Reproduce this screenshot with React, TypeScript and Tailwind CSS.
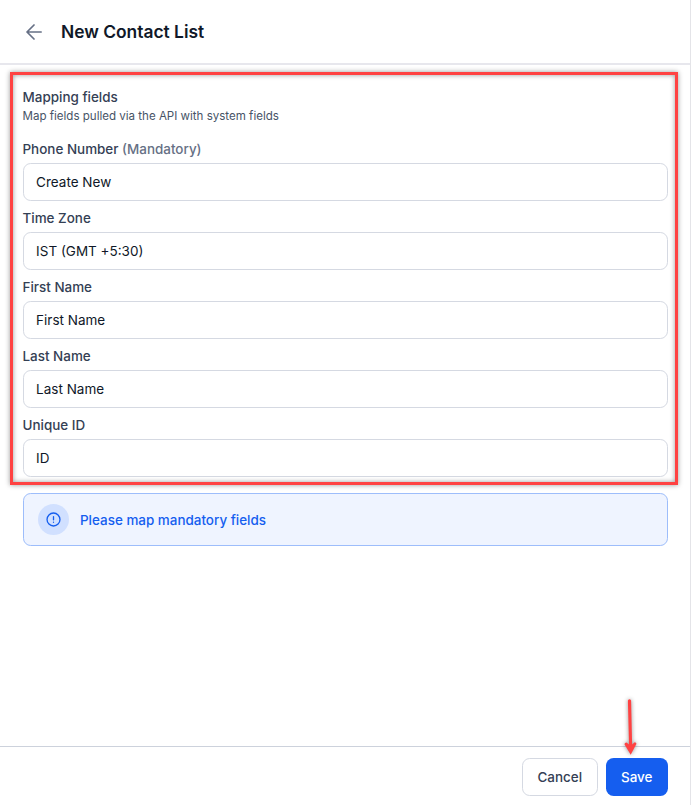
import React from "react";

const fields = [
  { label: "Phone Number", note: "(Mandatory)", value: "Create New" },
  { label: "Time Zone", value: "IST (GMT +5:30)" },
  { label: "First Name", value: "First Name" },
  { label: "Last Name", value: "Last Name" },
  { label: "Unique ID", value: "ID" },
];

function Header() {
  return (
    <header className="flex h-[65px] shrink-0 items-center border-b-2 border-[#e7e7ed] pl-[26px]">
      <svg className="mr-[19px] size-4" viewBox="0 0 16 16" fill="none" stroke="#667085" strokeWidth="1.7" strokeLinecap="round" strokeLinejoin="round">
        <path d="M15.2 8H1.2M8 1L1 8l7 7" />
      </svg>
      <h1 className="pt-px text-[17.4px] leading-6 font-semibold text-[#101828]">New Contact List</h1>
    </header>
  );
}

function Field({ label, note, value }: { label: string; note?: string; value: string }) {
  return (
    <div className="flex flex-col gap-[3.34px]">
      <div className="h-[19.2px] text-[13.44px] leading-[19.2px] font-medium text-[#344054]">
        {label} {note && <span className="text-[#667085]">{note}</span>}
      </div>
      <div className="flex h-[38.4px] items-center rounded-[7.68px] border border-[#d5d9e2] bg-white px-[12.6px] text-[13.5px] text-[#101828]">
        {value}
      </div>
    </div>
  );
}

function Alert() {
  return (
    <div className="mt-[15.4px] flex h-[53.8px] items-center rounded-[7.68px] border border-[#9dbdfb] bg-[#eff4ff] pl-[14.5px]">
      <div className="flex size-[31px] items-center justify-center rounded-full bg-[#d1e0ff]">
        <svg className="size-[15px]" viewBox="0 0 16 16" fill="none" stroke="#155eef" strokeWidth="1.4" strokeLinecap="round">
          <circle cx="8" cy="8" r="6.9" />
          <path d="M8 5v3.300M8 10.900v.1" />
        </svg>
      </div>
      <p className="ml-[11px] pt-px text-[13.44px] font-medium text-[#155eef]">Please map mandatory fields</p>
    </div>
  );
}

export default function App() {
  return (
    <div className="relative flex h-[805px] w-[691px] flex-col overflow-hidden border-r border-[#e4e4e8] bg-white font-['Inter',sans-serif]">
      <Header />
      <main className="flex-1 px-[22.5px] pt-[23px]">
        <h2 className="text-[13.44px] leading-[19px] font-medium text-[#344054]">Mapping fields</h2>
        <p className="text-[11.56px] leading-[18px] text-[#475467]">Map fields pulled via the API with system fields</p>
        <div className="mt-[15px] flex flex-col gap-[8.180px]">
          {fields.map((field) => (
            <Field key={field.label} {...field} />
          ))}
        </div>
        <Alert />
      </main>
      <footer className="flex h-[59px] shrink-0 justify-end gap-[7.68px] border-t border-[#cdd2dc] pt-[10.5px] pr-[22px]">
        <button className="h-[38.4px] w-[76px] rounded-[7.68px] border border-[#d5d9e2] bg-white text-[13.44px] font-medium text-[#344054]">Cancel</button>
        <button className="h-[38.4px] w-[62.5px] rounded-[7.68px] bg-[#155eef] text-[13.44px] font-medium text-white">Save</button>
      </footer>

      {/* Callout frame and pointer laid over the form */}
      <div className="pointer-events-none absolute top-[72px] left-[10px] h-[413px] w-[668px] border-[3px] border-[#ff4242] shadow-[0_0_5px_rgba(0,0,0,0.4),inset_0_0_5px_rgba(0,0,0,0.4)]" />
      <svg className="pointer-events-none absolute top-[692px] left-[612px] h-[68px] w-[36px] drop-shadow-[0_0_2px_rgba(0,0,0,0.45)]" viewBox="0 0 36 68" fill="#ff4242">
        <path d="M15.900 8.500Q17.500 6 19.100 8.500L20.100 52.600L22.700 50.200Q24.900 50.400 24.200 52.200L18.700 62.800L12.600 52.500Q12.300 50.600 14.500 50.500L17 52.600Z" />
      </svg>
    </div>
  );
}
